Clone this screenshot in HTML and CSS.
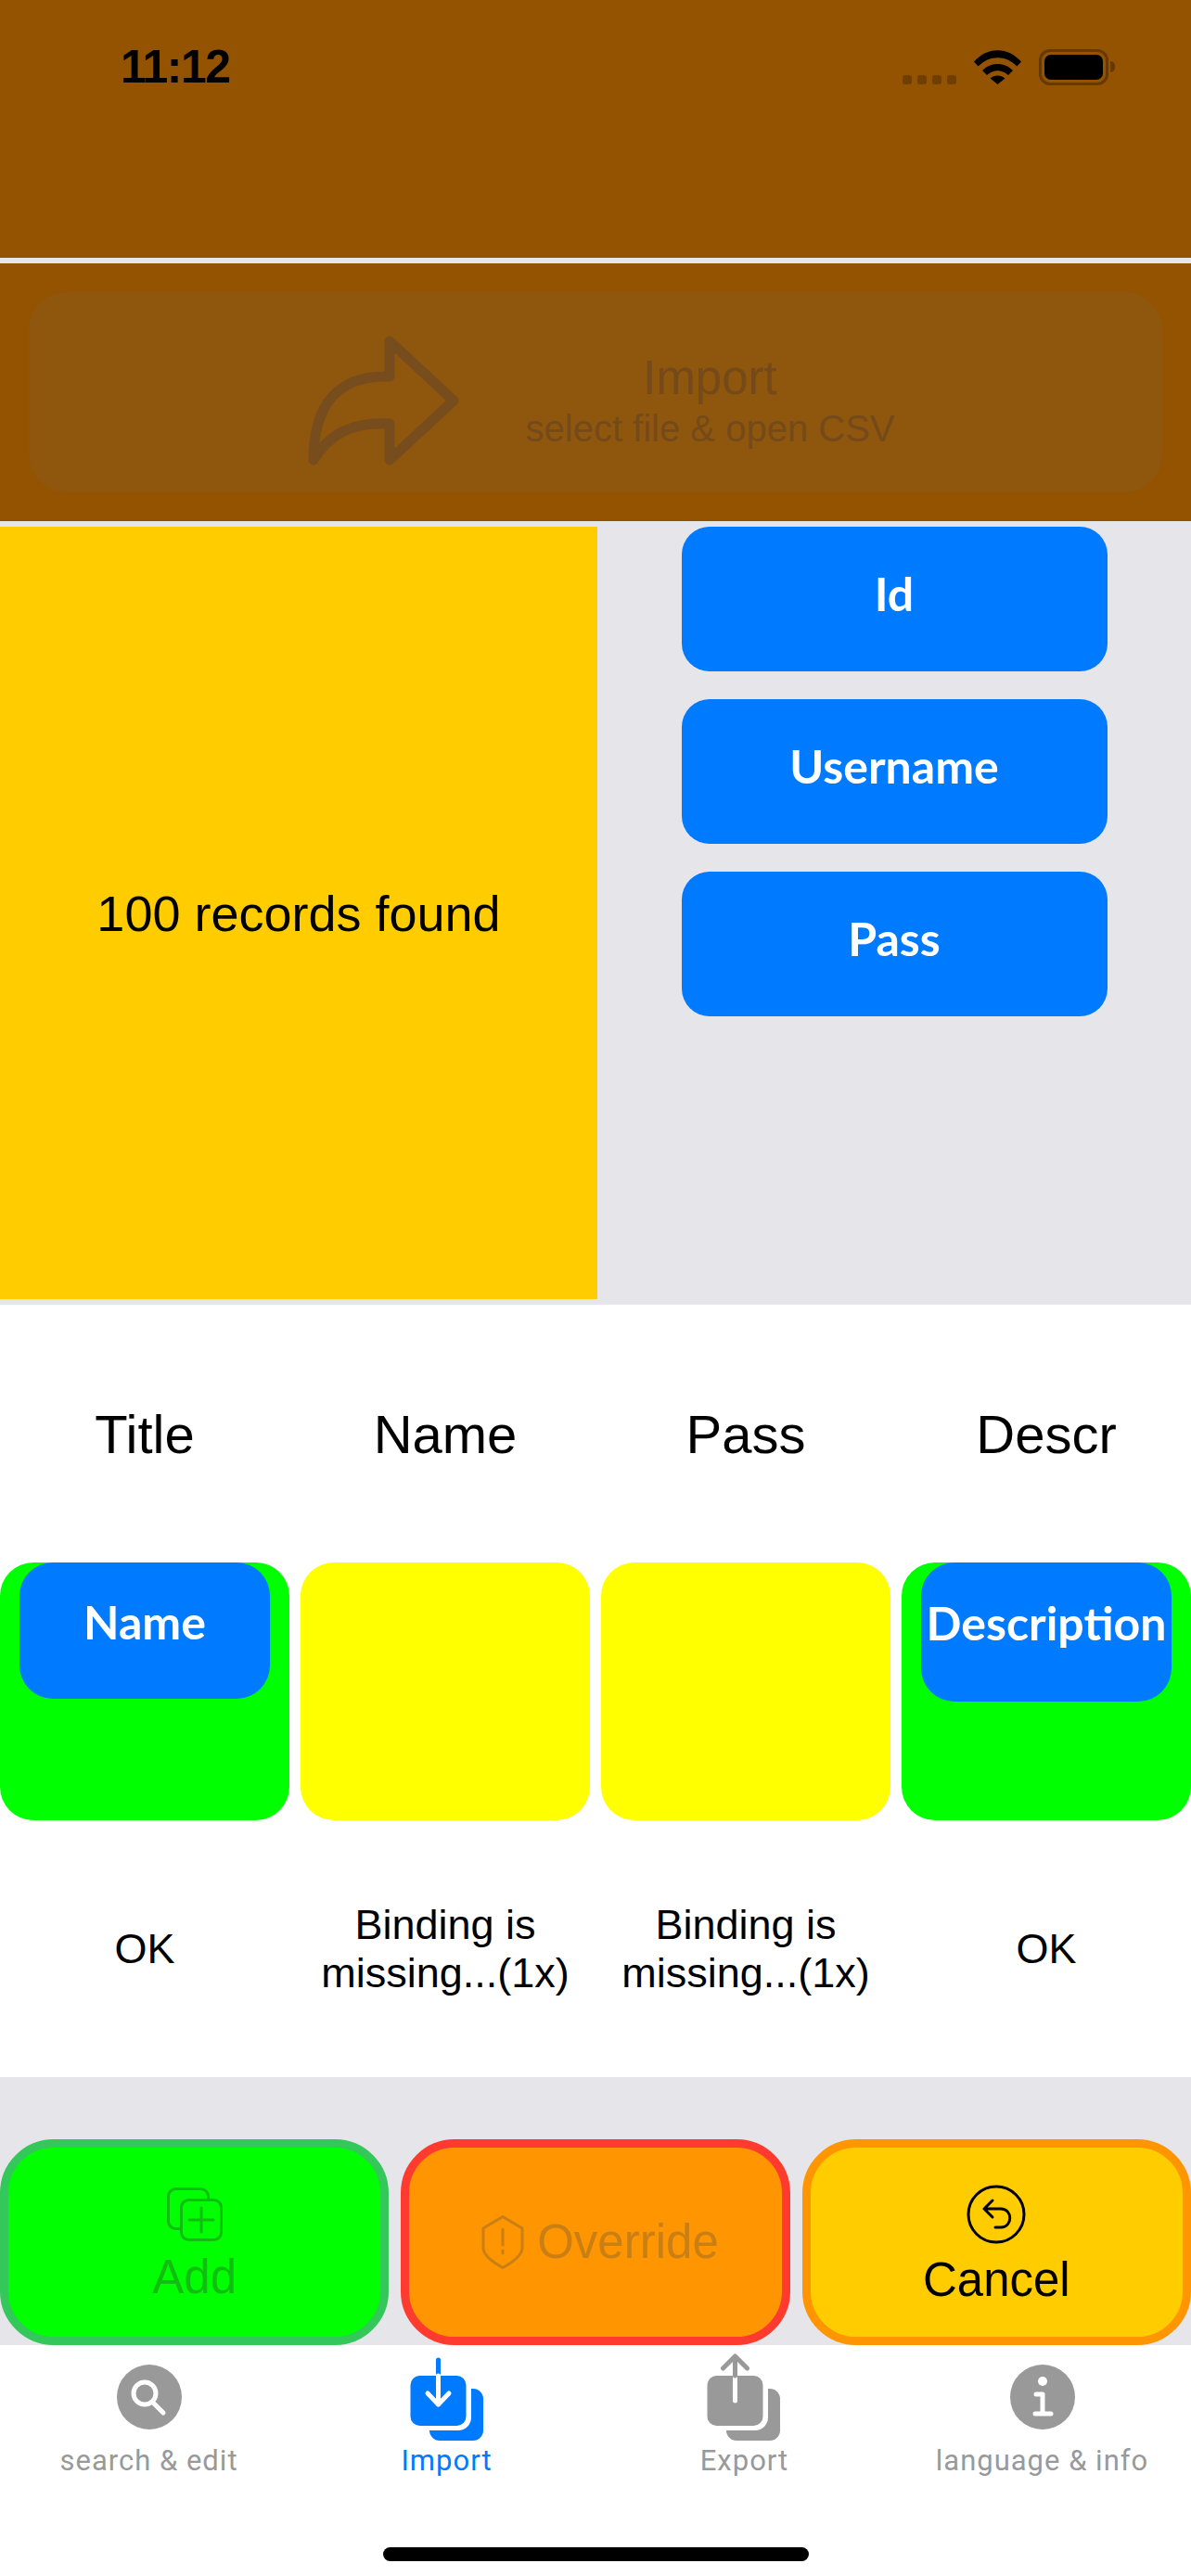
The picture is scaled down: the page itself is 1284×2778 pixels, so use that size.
FILE: index.html
```html
<!DOCTYPE html>
<html lang="en">
<head>
    <meta charset="UTF-8">
    <meta name="viewport" content="width=device-width, initial-scale=1.0">
    <title>Import</title>
    <link rel="stylesheet" href="styles.css">
</head>
<body>
    <div class="top-band">
        <div class="status-time">11:12</div>
        <div class="status-icons">
            <div class="signal"><span></span><span></span><span></span><span></span></div>
            <svg class="wifi" width="51" height="37" viewBox="0 0 51 37">
                <path d="M0 12.5C14.500 -4 36.500 -4 51 12.500L46.500 17.500C34.500 5 16.500 5 4.500 17.500Z"/>
                <path d="M9 22C18 12.500 33 12.500 42 22L37 27C30 20.500 21 20.500 14 27Z"/>
                <path d="M17.500 30.500C22 26.500 29 26.500 33.500 30.500L25.500 37Z"/>
            </svg>
            <div class="battery"><div class="battery-fill"></div></div>
            <div class="battery-tip"></div>
        </div>
    </div>

    <div class="import-band">
        <div class="import-button">
            <svg class="import-arrow" width="172" height="148" viewBox="0 0 172 148">
                <path d="M91 48V10L160 74L91 138V99C50 97 26 110 9 138C9 80 34 46 91 48Z"/>
            </svg>
            <div class="import-text">
                <div class="import-title">Import</div>
                <div class="import-sub">select file &amp; open CSV</div>
            </div>
        </div>
    </div>

    <div class="fields">
        <div class="records">100 records found</div>
        <div class="field-list">
            <div class="chip field-chip">Id</div>
            <div class="chip field-chip">Username</div>
            <div class="chip field-chip">Pass</div>
        </div>
    </div>

    <div class="binding">
        <div class="grid-row heading-row">
            <div>Title</div>
            <div>Name</div>
            <div>Pass</div>
            <div>Descr</div>
        </div>
        <div class="grid-row slot-row">
            <div class="slot slot-ok"><div class="chip slot-chip">Name</div></div>
            <div class="slot slot-missing"></div>
            <div class="slot slot-missing"></div>
            <div class="slot slot-ok"><div class="chip slot-chip slot-chip-tall">Description</div></div>
        </div>
        <div class="grid-row status-row">
            <div>OK</div>
            <div>Binding is<br>missing...(1x)</div>
            <div>Binding is<br>missing...(1x)</div>
            <div>OK</div>
        </div>
    </div>

    <div class="actions">
        <div class="action action-stack action-add">
            <svg width="60" height="58" viewBox="0 0 60 58">
                <rect x="1.500" y="1.500" width="43" height="43" rx="8"/>
                <rect x="15.500" y="13.500" width="43" height="43" rx="8" class="icon-front"/>
                <path d="M37 22V48M24 35H50"/>
            </svg>
            <div class="action-label">Add</div>
        </div>
        <div class="action action-override">
            <div class="override-line">
                <svg width="46" height="58" viewBox="0 0 46 58">
                    <path d="M23 1.500L44 14V35C44 43 33 51 23 56.500C13 51 2 43 2 35V14Z"/>
                    <path d="M23 15V32M23 38V41"/>
                </svg>
                <div class="action-label">Override</div>
            </div>
        </div>
        <div class="action action-stack action-cancel">
            <svg width="64" height="64" viewBox="0 0 64 64">
                <circle cx="32" cy="32" r="30"/>
                <path d="M28 17L19 26L28 35M19 26H37C50 26 50 46 37 46H31"/>
            </svg>
            <div class="action-label">Cancel</div>
        </div>
    </div>

    <div class="tab-bar">
        <div class="tabs">
            <div class="tab">
                <svg class="tab-icon" width="120" height="100" viewBox="0 0 120 100">
                    <circle cx="60" cy="50" r="35" class="solid"/>
                    <circle cx="55" cy="46" r="12" class="cut"/>
                    <path d="M64 56L75 67" class="cut"/>
                </svg>
                <div class="tab-label">search &amp; edit</div>
            </div>
            <div class="tab tab-active">
                <svg class="tab-icon" width="120" height="100" viewBox="0 0 120 100">
                    <rect x="41" y="41" width="58" height="56" rx="11" class="solid"/>
                    <rect x="20" y="20" width="66" height="66" rx="14" class="gap"/>
                    <rect x="20.500" y="27" width="60" height="54" rx="10" class="solid"/>
                    <path d="M50.500 10V27" class="line"/>
                    <path d="M50.500 27V58M39 46L50.500 58L62 46" class="cut"/>
                </svg>
                <div class="tab-label">Import</div>
            </div>
            <div class="tab">
                <svg class="tab-icon" width="120" height="100" viewBox="0 0 120 100">
                    <rect x="40" y="41" width="58" height="56" rx="11" class="solid"/>
                    <rect x="19" y="20" width="66" height="66" rx="14" class="gap"/>
                    <rect x="19.500" y="27" width="60" height="54" rx="10" class="solid"/>
                    <path d="M49.500 27V54" class="cut"/>
                    <path d="M49.500 6V27M36.500 19L49.500 6L62.500 19" class="line"/>
                </svg>
                <div class="tab-label">Export</div>
            </div>
            <div class="tab">
                <svg class="tab-icon" width="120" height="100" viewBox="0 0 120 100">
                    <circle cx="60" cy="50" r="35" class="solid"/>
                    <circle cx="60" cy="33" r="5" class="dot"/>
                    <path d="M53 47H60V68M52 68H69" class="cut"/>
                </svg>
                <div class="tab-label">language &amp; info</div>
            </div>
        </div>
        <div class="home-bar"></div>
    </div>
</body>
</html>
```

FILE: styles.css
```css
body {
    margin: 0;
    width: 1284px;
    height: 2778px;
    overflow: hidden;
    background-color: #e5e5ea;
    font-family: "Liberation Sans", Arial, sans-serif;
    color: #000;
}

.top-band {
    height: 278px;
    box-sizing: border-box;
    background-color: #945300;
    display: flex;
    justify-content: space-between;
    align-items: flex-start;
    padding: 44px 82px 0 130px;
}

.status-time {
    font-size: 50px;
    font-weight: 700;
    line-height: 56px;
    letter-spacing: -1.500px;
}

.status-icons {
    display: flex;
    align-items: flex-start;
    padding-top: 9px;
}

.signal {
    display: flex;
    gap: 6px;
    margin-top: 28px;
    margin-right: 19px;
}

.signal span {
    width: 10px;
    height: 10px;
    border-radius: 3px;
    background-color: #6f3e00;
}

.wifi {
    margin-top: 1px;
    margin-right: 19px;
}

.battery {
    width: 75px;
    height: 39px;
    box-sizing: border-box;
    border: 3px solid #653900;
    border-radius: 12px;
    padding: 3px;
}

.battery-fill {
    height: 100%;
    background-color: #000;
    border-radius: 7px;
}

.battery-tip {
    width: 5px;
    height: 12px;
    margin: 13px 0 0 2px;
    border-radius: 0 6px 6px 0;
    background-color: #653900;
}

.import-band {
    height: 278px;
    margin-top: 6px;
    box-sizing: border-box;
    padding: 31px 31px;
    background-color: #945300;
}

.import-button {
    height: 216px;
    box-sizing: border-box;
    padding-left: 11px;
    padding-top: 18px;
    border-radius: 40px;
    background-color: #8f560d;
    display: flex;
    justify-content: center;
    align-items: center;
    gap: 64px;
    color: #754a1a;
}

.import-arrow {
    fill: none;
    stroke: #774d1d;
    stroke-width: 11;
    stroke-linejoin: round;
}

.import-text {
    text-align: center;
    width: 401px;
    margin-top: 4px;
}

.import-title {
    font-size: 51px;
    line-height: 56px;
}

.import-sub {
    font-size: 40px;
    line-height: 52px;
}

.fields {
    height: 833px;
    margin-top: 6px;
    display: flex;
}

.records {
    width: 644px;
    background-color: #ffcc00;
    font-size: 54px;
    display: flex;
    align-items: center;
    justify-content: center;
}

.field-list {
    flex: 1;
    display: flex;
    flex-direction: column;
    align-items: center;
    gap: 30px;
}

.chip {
    box-sizing: border-box;
    background-color: #007aff;
    color: #fff;
    font-family: Lato, "Liberation Sans", sans-serif;
    font-weight: 700;
    font-size: 50px;
    display: flex;
    align-items: center;
    justify-content: center;
    padding-bottom: 12px;
}

.field-chip {
    width: 459px;
    height: 156px;
    border-radius: 30px;
}

.binding {
    height: 833px;
    margin-top: 6px;
    background-color: #fff;
}

.grid-row {
    display: grid;
    grid-template-columns: repeat(4, 1fr);
    column-gap: 12px;
    text-align: center;
}

.grid-row > div {
    display: flex;
    align-items: center;
    justify-content: center;
}

.heading-row {
    height: 278px;
    font-size: 58px;
}

.heading-row > div {
    align-items: flex-end;
    padding-bottom: 105px;
}

.slot-row {
    height: 278px;
}

.grid-row > .slot {
    display: block;
    border-radius: 36px;
}

.slot-ok {
    background-color: #00ff00;
    padding: 0 21px;
}

.slot-missing {
    background-color: #ffff00;
}

.slot-chip {
    height: 147px;
    border-radius: 36px;
    padding-bottom: 20px;
}

.slot-chip-tall {
    height: 150px;
}

.status-row {
    height: 277px;
    font-size: 45px;
    line-height: 52px;
}

.actions {
    height: 289px;
    box-sizing: border-box;
    padding-top: 67px;
    display: grid;
    grid-template-columns: repeat(3, 1fr);
    column-gap: 13px;
}

.action {
    box-sizing: border-box;
    border: 9px solid;
    border-radius: 58px;
    display: flex;
    flex-direction: column;
    align-items: center;
    justify-content: center;
    font-size: 51px;
}

.action svg {
    fill: none;
    stroke: currentColor;
    stroke-width: 3;
    stroke-linejoin: round;
    stroke-linecap: round;
    display: block;
}

.action-stack {
    padding-top: 8px;
}

.action-stack .action-label {
    margin-top: 10px;
}

.action-add {
    background-color: #00ff00;
    border-color: #34c759;
    color: #12bd12;
}

.action-add .icon-front {
    fill: #00ff00;
}

.action-override {
    background-color: #ff9500;
    border-color: #ff3b30;
    color: #c97f14;
}

.action-cancel {
    background-color: #ffcc00;
    border-color: #ff9500;
}

.override-line {
    display: flex;
    align-items: center;
    gap: 14px;
    padding-left: 10px;
}

.action-label {
    line-height: 58px;
}

.tab-bar {
    height: 249px;
    box-sizing: border-box;
    background-color: #fff;
    padding-top: 6px;
}

.tabs {
    display: grid;
    grid-template-columns: repeat(4, 1fr);
}

.tab {
    display: flex;
    flex-direction: column;
    align-items: center;
    color: #999;
}

.tab-active {
    color: #007aff;
}

.tab-icon {
    display: block;
    overflow: visible;
}

.tab-icon .solid {
    fill: currentColor;
}

.tab-icon .gap,
.tab-icon .dot {
    fill: #fff;
}

.tab-icon .cut,
.tab-icon .line {
    fill: none;
    stroke-width: 5;
    stroke-linecap: round;
    stroke-linejoin: round;
}

.tab-icon .cut {
    stroke: #fff;
}

.tab-icon .line {
    stroke: currentColor;
}

.tab-label {
    font-family: Roboto, "Liberation Sans", sans-serif;
    font-size: 31px;
    line-height: 36px;
    letter-spacing: 1px;
    margin-top: 1px;
}

.home-bar {
    width: 459px;
    height: 15px;
    margin: 75px auto 0;
    border-radius: 8px;
    background-color: #000;
}
```
